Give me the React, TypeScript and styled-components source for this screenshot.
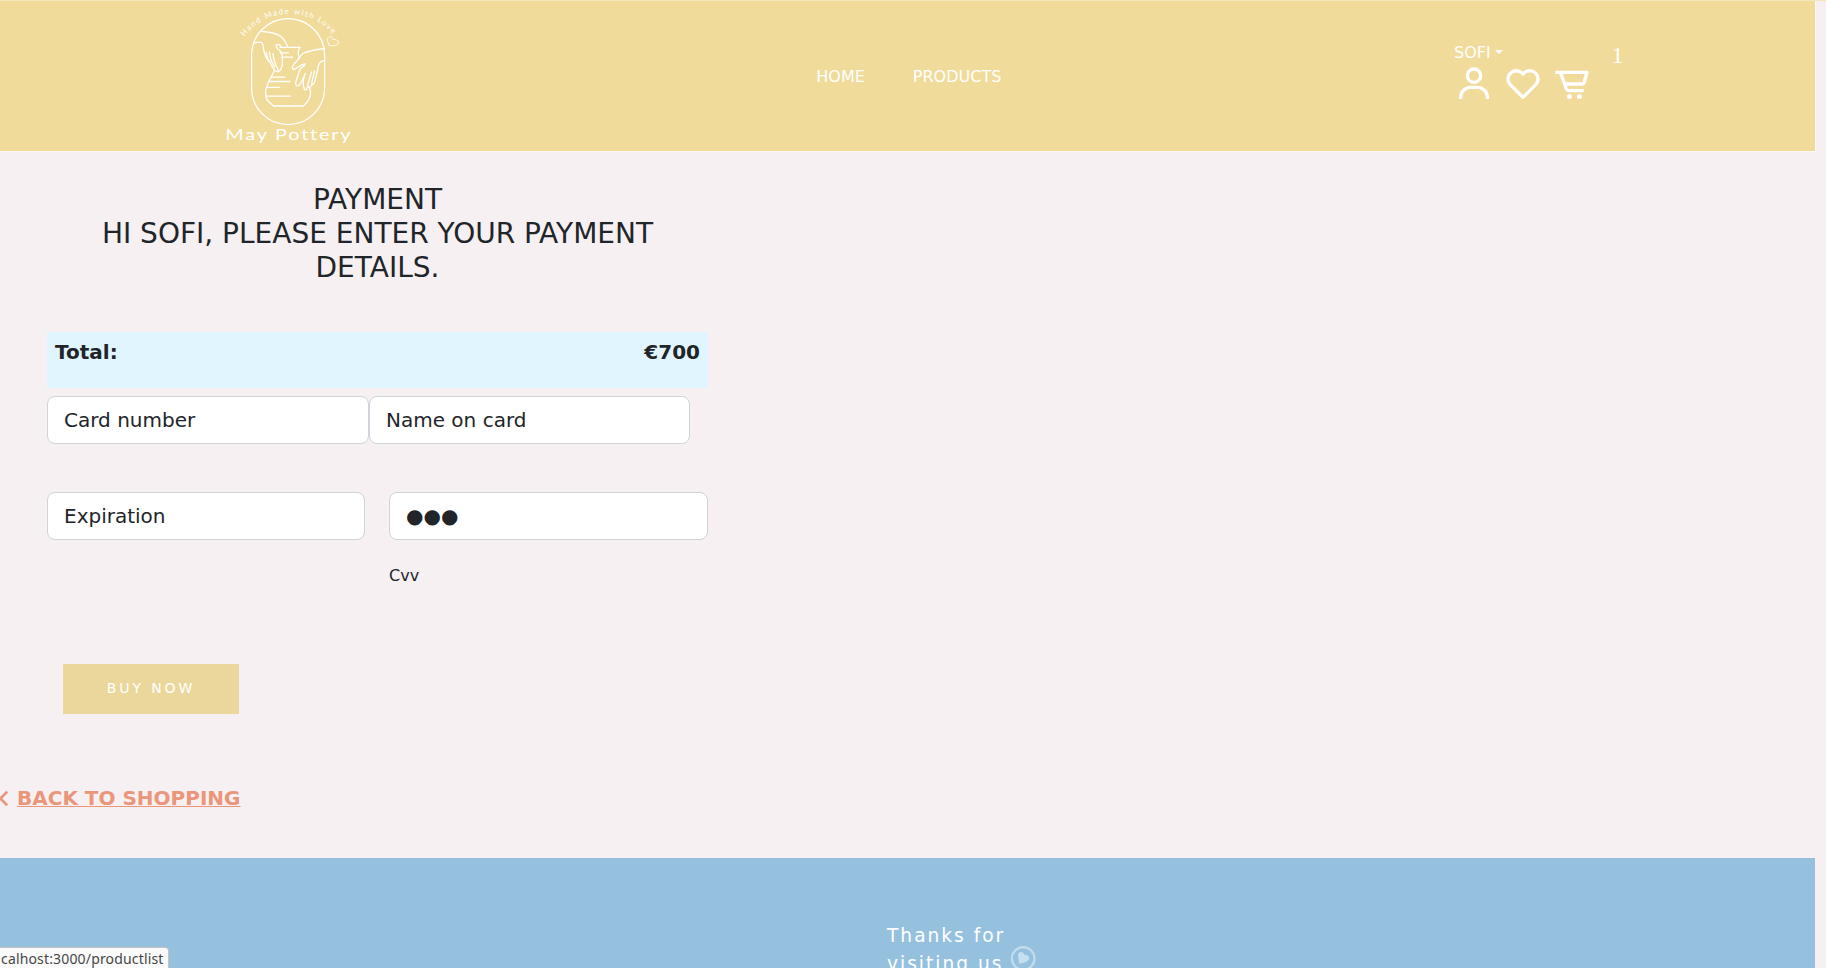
import React from 'react';
import styled, { createGlobalStyle } from 'styled-components';
import { BiUser, BiHeart, BiCartAlt, BiChevronLeft } from 'react-icons/bi';

const Global = createGlobalStyle`
  *, *::before, *::after { box-sizing: border-box; }
  html, body { margin: 0; height: 968px; overflow: hidden; }
  body {
    background: #f6f0f2;
    color: #212529;
    font: 16px/1.5 "DejaVu Sans", sans-serif;
  }
  h3, p { margin: 0; font-weight: 400; }
`;

const Page = styled.div`
  height: 968px;
  overflow: hidden;
  border-top: 1px solid #f5e5ba;
  position: relative;
`;

const Header = styled.header`
  width: 1816px;
  height: 151px;
  background: #f0db9a;
  border: solid #fdf8f2;
  border-width: 0 1px 1px 0;
  display: flex;
`;

const Brand = styled.a`
  display: block;
  width: 816px;
  padding-left: 210px;
  svg { display: block; }
`;

const Nav = styled.nav`
  display: flex;
  gap: 48px;
  width: 638px;
  padding: 64px 0 0 0.3px;
  color: #fff;
`;

const Account = styled.div`
  width: 157.5px;
  padding-top: 40px;
  color: #fff;
`;

const UserMenu = styled.div`
  display: flex;
  align-items: center;
  height: 23px;
`;

const Caret = styled.span`
  margin: 0 0 1px 4px;
  border: 4.5px solid transparent;
  border-top-color: #fff;
  border-bottom: 0;
`;

const Icons = styled.div`
  display: flex;
  gap: 9px;
  svg { display: block; }
`;

const Count = styled.span`
  padding-top: 40px;
  color: #fff;
  font: 24px/28px "Liberation Serif", serif;
`;

const Main = styled.main`
  height: 706px;
`;

const Checkout = styled.section`
  width: 661px;
  margin-left: 47px;
  padding-top: 31px;
`;

const Title = styled.h3`
  font-size: 28px;
  line-height: 34px;
  text-align: center;
`;

const Total = styled.div`
  display: flex;
  justify-content: space-between;
  height: 56px;
  margin: 47px 0 8px;
  padding: 5px 8px;
  background: #e0f5ff;
  font-size: 20px;
  font-weight: 700;
`;

const Row = styled.div<{ $gap: number }>`
  display: flex;
  gap: ${(p) => p.$gap}px;
  margin-bottom: 48px;
`;

const Field = styled.input<{ $w: number }>`
  width: ${(p) => p.$w}px;
  height: 48px;
  padding: 8px 16px;
  border: 1px solid #ced4da;
  border-radius: 8px;
  background: #fff;
  color: #212529;
  font: 20px/30px "DejaVu Sans", sans-serif;
  outline: 0;
  &::placeholder { color: #212529; opacity: 1; }
`;

const Hint = styled.p`
  margin: -24px 0 0 342px;
`;

const Buy = styled.button`
  display: block;
  width: 176px;
  height: 50px;
  margin: 76px 0 0 16px;
  padding: 0 0 2px;
  border: 0;
  background: #ebd79b;
  color: #fff;
  font: 14px "DejaVu Sans", sans-serif;
  letter-spacing: 2.9px;
`;

const Back = styled.div`
  display: flex;
  align-items: center;
  height: 30px;
  margin: 69px 0 0 -12px;
  color: #e9967a;
  font-size: 20px;
  font-weight: 700;
  svg { flex: none; margin-right: -4px; }
  a { text-decoration: underline; text-decoration-thickness: 1px; }
`;

const Footer = styled.footer`
  display: flex;
  width: 1815px;
  height: 110px;
  padding: 64px 0 0 887px;
  background: #95c1df;
  color: #fff;
`;

const Thanks = styled.p`
  width: 123px;
  font-size: 18.6px;
  line-height: 28px;
  letter-spacing: 2px;
`;

const HeartBadge = styled.svg`
  margin-top: 22.5px;
`;

const Status = styled.div`
  position: absolute;
  left: 0;
  bottom: 0;
  width: 169px;
  height: 21px;
  padding-left: 1px;
  overflow: hidden;
  border: solid #c4c4c4;
  border-width: 1px 1px 0 0;
  border-top-right-radius: 4px;
  background: #fafafa;
  color: #474747;
  font: 14px/21px "Noto Sans", sans-serif;
  letter-spacing: 0.16px;
  white-space: nowrap;
`;

const LogoText = styled.text`
  fill: #fff;
  stroke: none;
  font-family: Lato, sans-serif;
  font-variant-ligatures: none;
`;

function Logo() {
  return (
    <svg width="160" height="150" viewBox="0 1 160 150" fill="none" stroke="#fff" strokeWidth="1.3" strokeLinecap="round" strokeLinejoin="round">
      <defs><path id="arc" d="M34.500 36.500A56 56 0 0 1 124 36" /></defs>
      <rect x="41.6" y="18.6" width="73" height="106" rx="36.5" />
      {/* left arm and hand */}
      <path d="M52 31.500C60 32 67 33.500 71 36.500C74 39 76 43 77.500 46.500" />
      <path d="M43.500 43.300C47 42 50 42 52 42.700C53.500 44 53 49 54.500 53C55.500 57 57.500 60 60 62C62 66 63 69 65 70.500C67 72.500 70 72 71 69C73 66 72.500 59 72 55C72 50 69 51 67 48C65 45 67 43.500 69.500 45C71 46 71 47 72 47.500" />
      <path d="M56.500 52.500C57 57 58.500 61 60.500 63M59.500 52C60 58 62 63 64.500 67M63 53.500C63.500 60 66 66 68.500 70.500" />
      {/* vase */}
      <path d="M70 47.400H90C87.500 51 88 55 89.500 58.500M64.500 70.500L58 83C55 90 55 97 58 101L63.500 106H93.300C99 101 101 97 100.500 92L99.500 87.500M70 52.800H78.500M71.500 57.200H82.500M61.500 77.200H74.500M60 81.500H80M57.500 87.400H69.500M56.500 96.200H80.500" />
      {/* right arm and hand */}
      <path d="M114.500 48.500C106 49.500 98 51 93 53.500C89 56 88 61 84 64C82 67 81.500 69 83.500 69.500C88 69 90 64 95 64C95 66.500 91 67 90 69.500C88.500 74 86 80 85.700 83.500C86 87 89 86.500 90.500 83.500L95.500 73.500" />
      <path d="M94 77C92.500 82 93.500 87 94.500 89.500C96.500 91 97.500 88 98 84L101.500 72M98 86.500C100 89 101.500 86 102 82L104.500 71M102.500 84.500C105.500 84 105 78 107 73C108.500 66 108 61 114.500 60.700" />
      <path d="M119 45C118 42 116 39 118.500 37.500C120.500 36 122 35.500 123 39.500C125.500 39 129 40.500 128.500 43C127 46 122 46.500 119 45Z" strokeWidth=".8" />
      <LogoText fontSize="7.8"><textPath href="#arc" textLength="101" lengthAdjust="spacing">Hand Made with Love</textPath></LogoText>
      <LogoText x="15.3" y="139.5" fontSize="15.3" letterSpacing="1.4" textLength="127" lengthAdjust="spacingAndGlyphs">May Pottery</LogoText>
    </svg>
  );
}

export default function App() {
  return (
    <Page>
      <Global />
      <Header>
        <Brand><Logo /></Brand>
        <Nav><span>HOME</span><span>PRODUCTS</span></Nav>
        <Account>
          <UserMenu>SOFI<Caret /></UserMenu>
          <Icons><BiUser size={40} /><BiHeart size={40} /><BiCartAlt size={40} /></Icons>
        </Account>
        <Count>1</Count>
      </Header>
      <Main>
        <Checkout>
          <Title>PAYMENT</Title>
          <Title>HI SOFI, PLEASE ENTER YOUR PAYMENT DETAILS.</Title>
          <Total><span>Total:</span><span>€700</span></Total>
          <Row $gap={0}>
            <Field $w={322} placeholder="Card number" />
            <Field $w={321} placeholder="Name on card" />
          </Row>
          <Row $gap={24}>
            <Field $w={318} placeholder="Expiration" />
            <Field $w={319} placeholder="●●●" />
          </Row>
          <Hint>Cvv</Hint>
          <Buy>BUY NOW</Buy>
        </Checkout>
        <Back><BiChevronLeft size={33} /><a>BACK TO SHOPPING</a></Back>
      </Main>
      <Footer>
        <Thanks>Thanks for visiting us</Thanks>
        <HeartBadge width="26" height="26" viewBox="0 0 26 26">
          <circle cx="13.2" cy="13.5" r="11.3" fill="none" stroke="#c0ddef" strokeWidth="2.2" />
          <path d="M9.200 18.800L8 11C7.500 6.500 13.500 5.500 14.200 10C18.500 9 21 14 17.500 16C15 17.500 12.500 18 9.200 18.800Z" fill="#c4e0ef" />
        </HeartBadge>
      </Footer>
      <Status>calhost:3000/productlist</Status>
    </Page>
  );
}
